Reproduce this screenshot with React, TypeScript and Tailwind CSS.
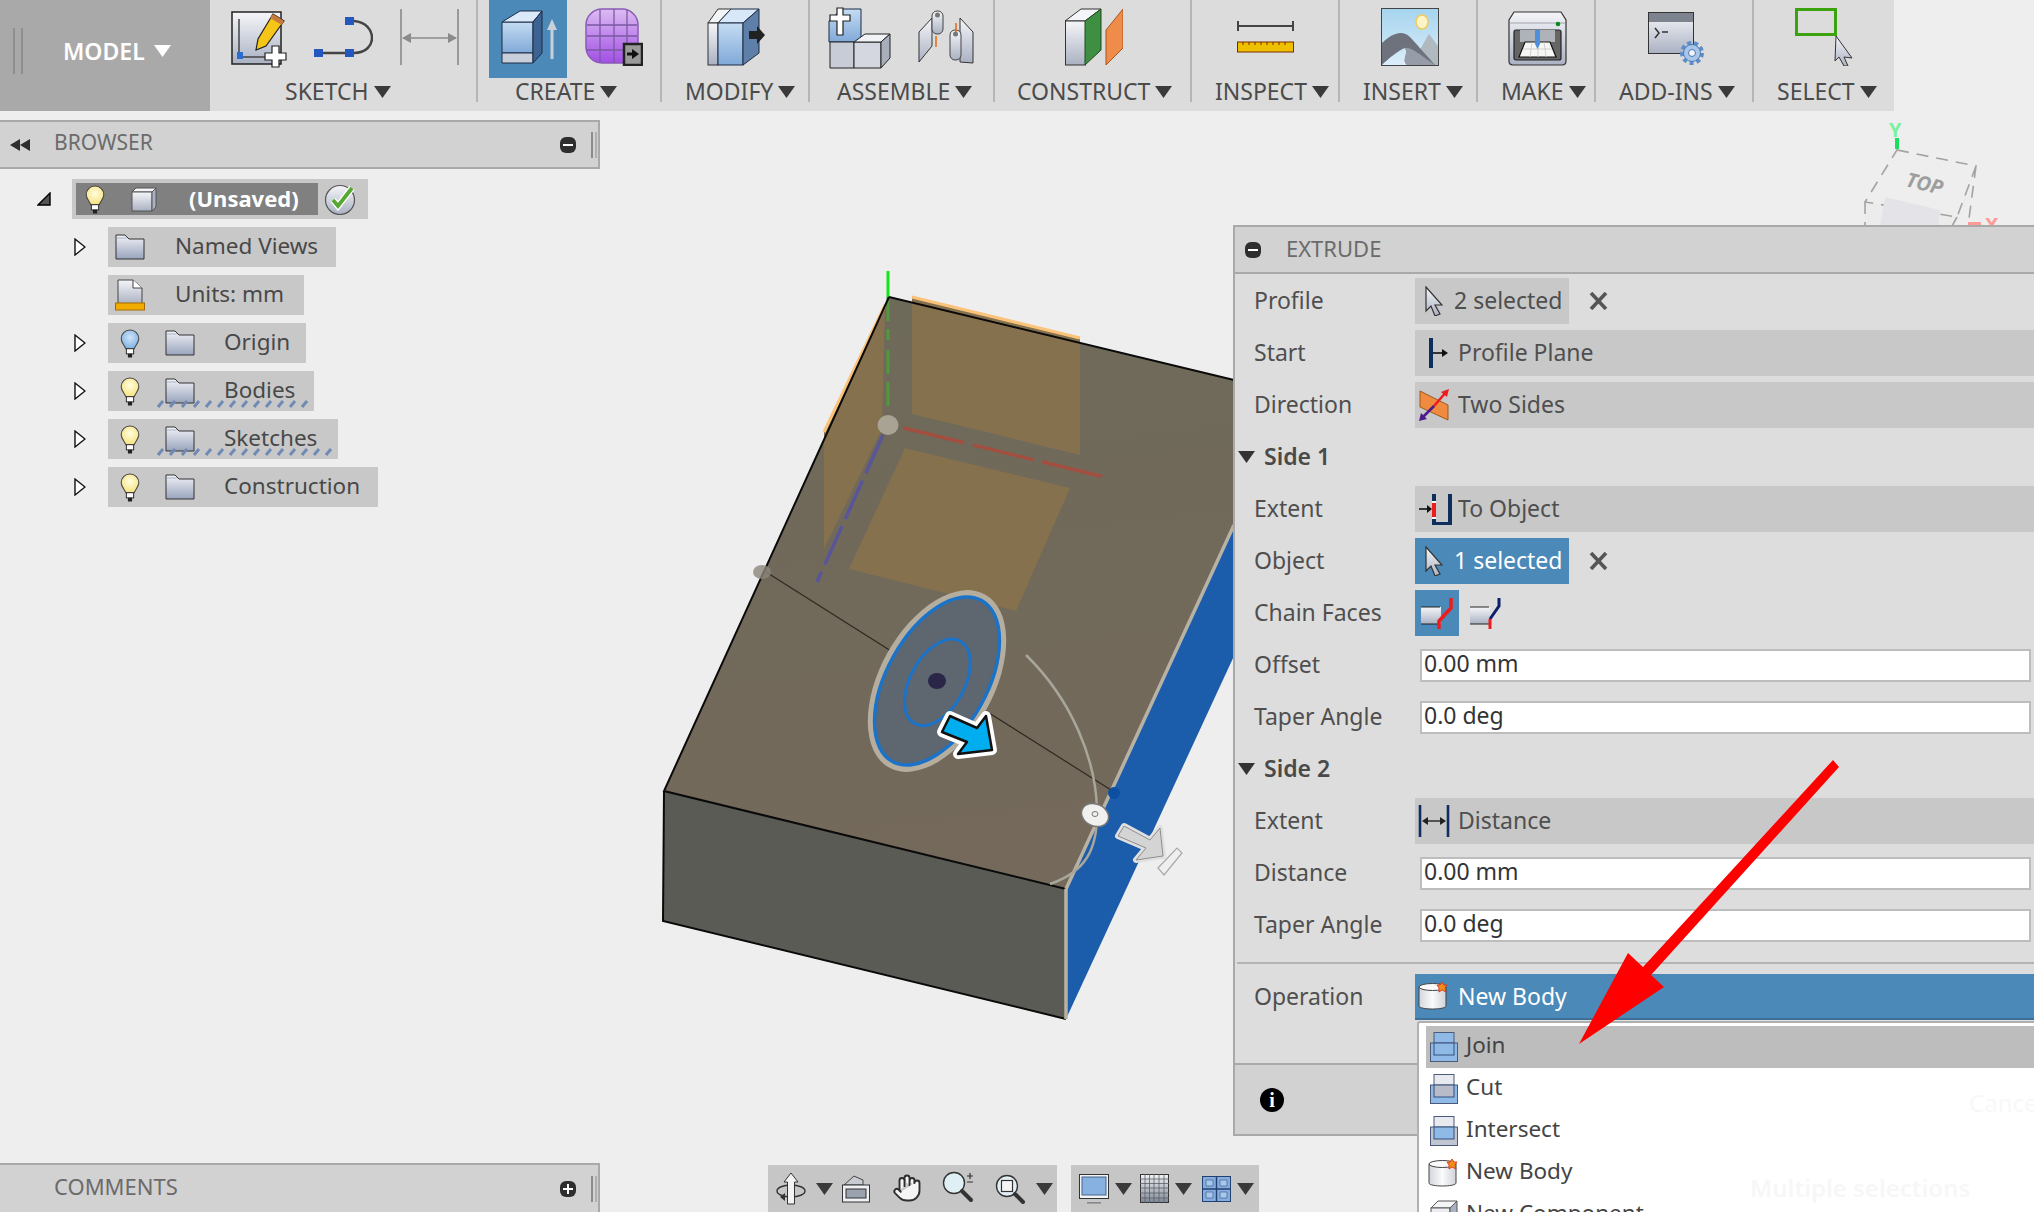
import React from "react";
import { Hand } from "lucide-react";

const Tri = ({ w = 17, h = 12, c = "#3a3a3a" }: { w?: number; h?: number; c?: string }) => (
  <svg width={w} height={h} viewBox="0 0 17 12" preserveAspectRatio="none" className="shrink-0">
    <polygon points="0,0 17,0 8.5,12" fill={c} />
  </svg>
);

const Defs = () => (
  <svg width="0" height="0" className="absolute">
    <defs>
      <linearGradient id="gBlue" x1="0" y1="0" x2="0" y2="1"><stop offset="0" stopColor="#c5dcf2" /><stop offset="1" stopColor="#7fa9d8" /></linearGradient>
      <linearGradient id="gGrey" x1="0" y1="0" x2="0" y2="1"><stop offset="0" stopColor="#f5f6f9" /><stop offset="1" stopColor="#aab1c2" /></linearGradient>
      <linearGradient id="gCyl" x1="0" y1="0" x2="1" y2="0"><stop offset="0" stopColor="#d4d6dc" /><stop offset="0.5" stopColor="#fbfbfc" /><stop offset="1" stopColor="#cfd2d8" /></linearGradient>
      <linearGradient id="gFolder" x1="0" y1="0" x2="0" y2="1"><stop offset="0" stopColor="#f2f3f7" /><stop offset="1" stopColor="#98a3bc" /></linearGradient>
      <linearGradient id="gPurple" x1="0" y1="0" x2="0" y2="1"><stop offset="0" stopColor="#dcbcf2" /><stop offset="1" stopColor="#a24fe6" /></linearGradient>
      <linearGradient id="gSky" x1="0" y1="0" x2="0" y2="1"><stop offset="0" stopColor="#a5d4ee" /><stop offset="1" stopColor="#dceefa" /></linearGradient>
      <radialGradient id="gBulbY" cx="0.5" cy="0.4" r="0.6"><stop offset="0" stopColor="#fffde0" /><stop offset="1" stopColor="#f8e27e" /></radialGradient>
      <radialGradient id="gBulbB" cx="0.5" cy="0.4" r="0.6"><stop offset="0" stopColor="#cfe4f8" /><stop offset="1" stopColor="#7fb2e4" /></radialGradient>
    </defs>
  </svg>
);

/* ---------- toolbar icons ---------- */
const SketchIcon = () => (
  <svg width="57" height="57" viewBox="0 0 57 57" className="overflow-visible">
    <rect x="1" y="1" width="49" height="52" fill="url(#gGrey)" stroke="#222" strokeWidth="1.5" />
    <path d="M8 8V46H36" fill="none" stroke="#444" strokeWidth="1.5" />
    <rect x="6" y="41" width="6" height="7" fill="#2a6cd0" />
    <polygon points="42,3 53,10 35,35 25,39 27,28" fill="#f5c518" stroke="#222" strokeWidth="1.2" />
    <polygon points="42,3 53,10 51,14 39,7" fill="#c67a3c" />
    <path d="M41 35h7v7h7v7h-7v7h-7v-7h-7v-7h7z" fill="#fff" stroke="#222" strokeWidth="1.2" />
  </svg>
);
const CurveIcon = () => (
  <svg width="59" height="40" viewBox="0 0 59 40">
    <path d="M9 36H31M40 4C64 6 64 36 40 36" fill="none" stroke="#444" strokeWidth="2.5" />
    <rect x="31" y="0" width="9" height="8" fill="#2458c0" />
    <rect x="31" y="32" width="9" height="8" fill="#2458c0" />
    <rect x="0" y="32" width="9" height="8" fill="#2458c0" />
  </svg>
);
const DimIcon = () => (
  <svg width="59" height="56" viewBox="0 0 59 56">
    <path d="M1 0V56M58 0V56M3 29H56" stroke="#8a8a8a" strokeWidth="1.6" fill="none" />
    <polygon points="2,29 11,24 11,34" fill="#8a8a8a" />
    <polygon points="57,29 48,24 48,34" fill="#8a8a8a" />
  </svg>
);
const ExtrudeIcon = () => (
  <svg width="58" height="54" viewBox="0 0 58 54">
    <polygon points="1,12 32,12 32,43 1,43" fill="url(#gBlue)" stroke="#1d2d44" strokeWidth="1" />
    <polygon points="1,43 32,43 32,53 1,53" fill="#c9cfda" stroke="#1d2d44" strokeWidth="1" />
    <polygon points="1,12 19,1 41,1 32,12" fill="#dbeafa" stroke="#1d2d44" strokeWidth="1" />
    <polygon points="32,12 41,1 41,43 32,53" fill="#3c6391" stroke="#1d2d44" strokeWidth="1" />
    <path d="M51 18V49" stroke="#c8d0d8" strokeWidth="3" />
    <polygon points="51,9 56,20 46,20" fill="#c8d0d8" />
  </svg>
);
const FormIcon = () => (
  <svg width="58" height="58" viewBox="0 0 58 58">
    <rect x="1" y="1" width="52" height="54" rx="16" fill="url(#gPurple)" stroke="#8a5ab8" strokeWidth="1.5" />
    <path d="M15 2V54M29 1V55M42 2V54M2 17H52M2 28H52M2 42H52" stroke="#7a5aa0" strokeWidth="1.3" fill="none" />
    <rect x="39" y="36" width="18" height="21" fill="#9a9a9a" stroke="#222" strokeWidth="2.5" />
    <path d="M42 46H48" stroke="#111" strokeWidth="3" />
    <polygon points="47,41 54,46 47,51" fill="#111" />
  </svg>
);
const ModifyIcon = () => (
  <svg width="58" height="58" viewBox="0 0 58 58">
    <polygon points="1,15 11,1 24,1 11,15" fill="#f3f4f7" stroke="#333" strokeWidth="1" />
    <rect x="1" y="15" width="10" height="42" fill="url(#gGrey)" stroke="#333" strokeWidth="1" />
    <polygon points="11,15 24,1 52,1 36,15" fill="#d8e8f8" stroke="#1d2d44" strokeWidth="1" />
    <rect x="11" y="15" width="25" height="42" fill="url(#gBlue)" stroke="#1d2d44" strokeWidth="1" />
    <polygon points="36,15 52,1 52,45 36,57" fill="#5d7fa8" stroke="#1d2d44" strokeWidth="1" />
    <polygon points="42,23 50,23 50,18 58,27 50,36 50,31 42,31" fill="#222" />
  </svg>
);
const AssembleIcon = () => (
  <svg width="61" height="60" viewBox="0 0 61 60" className="overflow-visible">
    <polygon points="0,34 0,13 13,1 32,1 32,34" fill="url(#gBlue)" stroke="#1d2d44" strokeWidth="1" />
    <polygon points="1,34 25,34 25,60 1,60" fill="#c8ccd6" stroke="#222" strokeWidth="1" />
    <polygon points="25,34 52,34 52,60 25,60" fill="#d4d7df" stroke="#222" strokeWidth="1" />
    <polygon points="25,34 36,26 61,26 52,34" fill="#f2f3f6" stroke="#222" strokeWidth="1" />
    <polygon points="52,34 61,26 61,50 52,60" fill="#a9aebb" stroke="#222" strokeWidth="1" />
    <path d="M8 0h6v7h7v6h-7v14H8V13H1V7h7z" fill="#fff" stroke="#222" strokeWidth="1.2" />
  </svg>
);
const JointIcon = () => (
  <svg width="56" height="54" viewBox="0 0 56 54">
    <polygon points="1,52 1,22 14,8 14,36" fill="url(#gGrey)" stroke="#333" strokeWidth="1" />
    <polygon points="42,52 55,53 55,22 42,8" fill="url(#gGrey)" stroke="#333" strokeWidth="1" />
    <rect x="14" y="1" width="11" height="23" rx="5" fill="url(#gGrey)" stroke="#444" strokeWidth="1" />
    <rect x="32" y="20" width="11" height="30" rx="5" fill="url(#gGrey)" stroke="#444" strokeWidth="1" />
    <path d="M38 13V24M18 26V37" stroke="#e86f1a" strokeWidth="1.6" />
    <circle cx="19.5" cy="5" r="2.5" fill="#777" />
    <circle cx="37.5" cy="24" r="2.5" fill="#777" />
  </svg>
);
const ConstructIcon = () => (
  <svg width="58" height="58" viewBox="0 0 58 58">
    <polygon points="0,13 16,1 36,1 20,13" fill="#f4f5f8" stroke="#333" strokeWidth="1" />
    <rect x="0.5" y="13" width="20" height="44" fill="url(#gGrey)" stroke="#333" strokeWidth="1" />
    <polygon points="20,13 36,1 36,42 20,57" fill="#3f8f43" stroke="#1f4a20" strokeWidth="1" />
    <polygon points="41,22 58,1 58,40 41,57" fill="#ef8c4a" stroke="#a8541c" strokeWidth="1" />
  </svg>
);
const InspectIcon = () => (
  <svg width="57" height="32" viewBox="0 0 57 32">
    <path d="M1 0V10M56 0V10M1 5H56" stroke="#444" strokeWidth="2" fill="none" />
    <rect x="0.5" y="21" width="56" height="10" fill="#efc000" stroke="#7a2c00" strokeWidth="1" />
    <path d="M6 21v3M12 21v3M18 21v3M24 21v3M30 21v3M36 21v3M42 21v3M48 21v3" stroke="#7a2c00" strokeWidth="1" />
  </svg>
);
const InsertIcon = () => (
  <svg width="58" height="58" viewBox="0 0 58 58">
    <rect x="0.5" y="0.5" width="57" height="57" fill="url(#gSky)" stroke="#444" strokeWidth="1" />
    <ellipse cx="41" cy="14" rx="6" ry="7" fill="#fdf5c8" stroke="#f4cb5a" strokeWidth="1.5" />
    <polygon points="30,57 48,26 57,38 57,57" fill="#b0b8c0" />
    <path d="M1 57V35C12 24 22 22 29 29C38 39 48 50 54 57H26C20 52 28 46 24 40C18 42 8 50 1 57Z" fill="#6e727c" />
    <path d="M26 57C20 52 28 46 24 40C30 38 46 52 54 57Z" fill="#979da8" />
  </svg>
);
const MakeIcon = () => (
  <svg width="59" height="55" viewBox="0 0 59 55">
    <path d="M6 1H53L58 9V50Q58 54 54 54H5Q1 54 1 50V9Z" fill="url(#gGrey)" stroke="#333" strokeWidth="1.2" />
    <path d="M2 12H57" stroke="#a0a4ac" strokeWidth="1" />
    <circle cx="50" cy="13" r="2.3" fill="#0a8a1e" />
    <rect x="6" y="19" width="47" height="30" rx="2" fill="#666666" stroke="#222" strokeWidth="1.2" />
    <rect x="12" y="19" width="35" height="12" fill="#aeb3ba" />
    <polygon points="11,46 17,31 42,31 48,46" fill="#f6f6f5" stroke="#111" strokeWidth="1.2" />
    <path d="M15 38H44M24 31L22 46M30 31V46M36 31L38 46" stroke="#c8c8c8" strokeWidth="0.8" />
    <polygon points="27,19 32,19 32,33 29.5,38 27,33" fill="#4d8fdb" />
  </svg>
);
const AddinsIcon = () => (
  <svg width="58" height="54" viewBox="0 0 58 54">
    <rect x="0.5" y="0.5" width="45" height="41" fill="url(#gGrey)" stroke="#333" strokeWidth="1" />
    <rect x="1" y="1" width="44" height="9" fill="#7e848f" />
    <path d="M7 16L11 21L7 26M14 20H20" stroke="#333" strokeWidth="1.5" fill="none" />
    <circle cx="44" cy="41" r="10" fill="none" stroke="#5e8dc8" strokeWidth="4" strokeDasharray="4 3" />
    <circle cx="44" cy="41" r="8.5" fill="#a8c6ea" stroke="#4a78b4" strokeWidth="1" />
    <circle cx="44" cy="41" r="3.5" fill="#f0f4fa" stroke="#4a78b4" strokeWidth="1" />
  </svg>
);
const SelectIcon = () => (
  <svg width="58" height="58" viewBox="0 0 58 58">
    <rect x="1.5" y="1.5" width="39" height="25" fill="none" stroke="#3ba30e" strokeWidth="3" />
    <polygon points="41,28 57,50 49,49 53,58 49,58 44,49 40,53" fill="url(#gGrey)" stroke="#333" strokeWidth="1" />
  </svg>
);

const ToolGroup = ({ w, lpad, label, children, last }: { w: string; lpad: string; label: string; children: React.ReactNode; last?: boolean }) => (
  <div className={`${w} h-[102px] flex flex-col shrink-0 ${last ? "" : "border-r-2 border-[#b6b6b6]"}`}>
    <div className="h-[79px] shrink-0 flex items-start">{children}</div>
    <div className={`h-[25px] shrink-0 flex items-center gap-[5px] text-[23px] leading-none text-[#4b4b4b] ${lpad}`}>
      <span>{label}</span>
      <Tri />
    </div>
  </div>
);

/* ---------- browser icons ---------- */
const Bulb = ({ blue }: { blue?: boolean }) => (
  <svg width="20" height="29" viewBox="0 0 19 28" className="shrink-0">
    <path d="M9.5 1C4.5 1 1 5 1 9.5C1 13 4 15.5 5.5 19H13.5C15 15.5 18 13 18 9.5C18 5 14.5 1 9.5 1Z" fill={blue ? "url(#gBulbB)" : "url(#gBulbY)"} stroke="#444" strokeWidth="1" />
    <rect x="6" y="19" width="7" height="5" fill="#fff" stroke="#333" strokeWidth="1" />
    <rect x="7.5" y="24" width="4" height="3.5" fill="#222" />
  </svg>
);
const Folder = () => (
  <svg width="30" height="26" viewBox="0 0 30 26" className="shrink-0">
    <path d="M1 1H10L14 5H29V25H1Z" fill="url(#gFolder)" stroke="#333" strokeWidth="1" />
    <path d="M2 4H12" stroke="#aab4c8" strokeWidth="1" />
  </svg>
);
const TreeTri = () => (
  <svg width="12" height="18" viewBox="0 0 12 18" className="shrink-0">
    <polygon points="1,1 11,9 1,17" fill="#fff" stroke="#111" strokeWidth="1.4" />
  </svg>
);
const Wavy = ({ w }: { w: number }) => (
  <svg width={w} height="8" viewBox={`0 0 ${w} 8`} className="absolute left-[49px] top-[29px]">
    {Array.from({ length: Math.floor(w / 12) + 1 }).map((_, i) => (
      <path key={i} d={`M${i * 12 + 1} 7L${i * 12 + 6} 1`} stroke="#6f8ab4" strokeWidth="3" />
    ))}
  </svg>
);

const TreeRow = ({ w, arrow = true, pad, text, children, extra }: { w: string; arrow?: boolean; pad: string; text: string; children?: React.ReactNode; extra?: React.ReactNode }) => (
  <div className="flex items-center h-[40px] pl-[74px]">
    <div className="w-[34px] shrink-0">{arrow && <TreeTri />}</div>
    <div className={`relative h-[40px] ${w} bg-[#c8c8c8] flex items-center`}>
      {children}
      <span className={`absolute top-0 h-[40px] flex items-center pb-[1px] ${pad} text-[22.5px] leading-none text-[#484848] whitespace-nowrap`}>{text}</span>
      {extra}
    </div>
  </div>
);

const Pill = ({ plus }: { plus?: boolean }) => (
  <div className="relative w-[16px] h-[16px] rounded-[6px] bg-[#2e2e2e] flex items-center justify-center">
    <div className="w-[10px] h-[2px] bg-white" />
    {plus && <div className="absolute w-[2px] h-[10px] bg-white" />}
  </div>
);
const Grip = () => (
  <div className="flex gap-[2px] h-[26px]">
    <div className="w-[2px] bg-[#8c8c8c]" />
    <div className="w-[2px] bg-[#b0b0b0]" />
  </div>
);

/* ---------- extrude icons ---------- */
const Cursor = () => (
  <svg width="18" height="30" viewBox="0 0 18 30" className="shrink-0">
    <polygon points="1,1 17,19 10,19 15,28 10,30 6,20 1,25" fill="url(#gGrey)" stroke="#333" strokeWidth="1.2" />
  </svg>
);
const StartIcon = () => (
  <svg width="32" height="32" viewBox="0 0 32 32">
    <path d="M13 1V31" stroke="#0f2e5e" strokeWidth="4" />
    <path d="M15 16H26" stroke="#111" strokeWidth="1.6" />
    <polygon points="30,16 24,12 24,20" fill="#111" />
  </svg>
);
const TwoSidesIcon = () => (
  <svg width="32" height="32" viewBox="0 0 32 32">
    <polygon points="2,2 30,16 30,31 2,18" fill="#ef8a3e" stroke="#9c5a20" strokeWidth="1" />
    <path d="M16 17L29 2" stroke="#ee1c1c" strokeWidth="2.6" />
    <polygon points="31,0 23,3 29,8" fill="#ee1c1c" />
    <path d="M16 17L3 30" stroke="#4b1a8c" strokeWidth="2.6" />
    <polygon points="1,32 3,24 9,30" fill="#4b1a8c" />
  </svg>
);
const ToObjectIcon = () => (
  <svg width="34" height="32" viewBox="0 0 34 32">
    <path d="M16 1V31H32V1" fill="none" stroke="#0f2e5e" strokeWidth="4" />
    <path d="M16 10V24" stroke="#ee1c1c" strokeWidth="4" />
    <path d="M16 8V10M16 24V26" stroke="#fff" strokeWidth="4" />
    <path d="M1 16H11" stroke="#111" strokeWidth="1.6" />
    <polygon points="14,16 9,12 9,20" fill="#111" />
  </svg>
);
const DistanceIcon = () => (
  <svg width="32" height="32" viewBox="0 0 32 32">
    <path d="M2 0V32M30 0V32" stroke="#0f2e5e" strokeWidth="2.6" />
    <path d="M6 16H26" stroke="#222" strokeWidth="1.4" />
    <polygon points="4,16 10,12 10,20" fill="#222" />
    <polygon points="28,16 22,12 22,20" fill="#222" />
  </svg>
);
const ChainIcon = ({ second }: { second?: boolean }) => (
  <svg width="34" height="32" viewBox="0 0 34 32">
    <rect x="1" y="10" width="20" height="17" fill="url(#gGrey)" />
    <path d="M1 10H20M1 27H20" stroke="#222" strokeWidth="1" />
    {second ? (
      <>
        <path d="M30 1V9L21 22" fill="none" stroke="#0b1f6b" strokeWidth="3" />
        <path d="M21 22V32" stroke="#ee1c1c" strokeWidth="3" />
      </>
    ) : (
      <path d="M31 1V11L19 24V32" fill="none" stroke="#ee1c1c" strokeWidth="3.5" />
    )}
  </svg>
);
const CylNew = () => (
  <svg width="30" height="28" viewBox="0 0 30 28" className="shrink-0">
    <path d="M1 5V24C1 28 28 28 28 24V5Z" fill="url(#gCyl)" stroke="#444" strokeWidth="1" />
    <ellipse cx="14.5" cy="5" rx="13.5" ry="3.5" fill="#fafafb" stroke="#444" strokeWidth="1" />
    <polygon points="24,0 26,3 29,3 27,6 28,10 24,8 21,10 21,6 19,3 22,3" fill="#f28c18" stroke="#d8261c" strokeWidth="0.8" />
  </svg>
);
const OpIcon = ({ kind }: { kind: "join" | "cut" | "intersect" }) => (
  <svg width="28" height="30" viewBox="0 0 28 30" className="shrink-0">
    <rect x="4" y="0.5" width="20" height="22" fill={kind === "join" ? "#8fb9e6" : "#e8eaf0"} stroke="#4a5a78" strokeWidth="1" />
    <rect x="0.5" y="11" width="27" height="18.5" fill={kind === "intersect" ? "#c2c6d2" : "#8fb9e6"} stroke="#4a5a78" strokeWidth="1" />
    <rect x="4" y="11" width="20" height="12" fill={kind === "join" ? "#8fb9e6" : kind === "cut" ? "#b8bcc8" : "#8fb9e6"} stroke="#34507a" strokeWidth="1" />
  </svg>
);
const XMark = () => (
  <svg width="19" height="18" viewBox="0 0 19 18">
    <path d="M2 1L17 17M17 1L2 17" stroke="#555" strokeWidth="3.6" />
  </svg>
);

const Label = ({ children }: { children: React.ReactNode }) => (
  <div className="w-[180px] pl-[19px] pb-[1px] shrink-0 text-[23px] leading-none text-[#4f4f4f]">{children}</div>
);
const Row = ({ label, children }: { label: string; children?: React.ReactNode }) => (
  <div className="flex items-center h-[46px]">
    <Label>{label}</Label>
    {children}
  </div>
);
const Field = ({ value }: { value: string }) => (
  <div className="ml-[5px] mr-[3px] flex-1 h-[33px] bg-white border-2 border-[#bdbdbd] flex items-center pl-[2px] pb-[3px] text-[23px] leading-none text-[#333]">{value}</div>
);
const Select = ({ icon, text, blue }: { icon: React.ReactNode; text: string; blue?: boolean }) => (
  <div className={`flex-1 h-[46px] flex items-center pl-[3px] text-[23px] leading-none ${blue ? "bg-[#4a89b8] text-white border-b-2 border-[#3d7099]" : "bg-[#c8c8c8] text-[#4f4f4f]"}`}>
    <div className="w-[40px] flex items-center">{icon}</div>
    <span className={blue ? "" : "pb-[1px]"}>{text}</span>
  </div>
);
const Picker = ({ text, blue }: { text: string; blue?: boolean }) => (
  <>
    <div className={`w-[154px] h-[46px] flex items-center pl-[10px] text-[23px] leading-none ${blue ? "bg-[#4a89b8] text-white" : "bg-[#c8c8c8] text-[#4f4f4f]"}`}>
      <Cursor />
      <span className="ml-[11px] pb-[1px] whitespace-nowrap">{text}</span>
    </div>
    <div className="ml-[20px] flex items-center"><XMark /></div>
  </>
);
const SideHead = ({ text }: { text: string }) => (
  <div className="flex items-center h-[46px] pl-[3px] gap-[9px] text-[23px] leading-none font-semibold text-[#4a4a4a]">
    <Tri w={17} h={12} c="#333" />
    <span className="pb-[1px]">{text}</span>
  </div>
);

/* ---------- nav bar icons ---------- */
const OrbitIcon = () => (
  <svg width="30" height="32" viewBox="0 0 30 32">
    <ellipse cx="15" cy="18" rx="14" ry="6" fill="none" stroke="#333" strokeWidth="1.4" />
    <polygon points="15,0 22,9 18.5,9 18.5,31 11.5,31 11.5,9 8,9" fill="#f2f3f5" stroke="#333" strokeWidth="1" />
    <polygon points="4,24 9,20 9,28" fill="#333" />
  </svg>
);
const ClapIcon = () => (
  <svg width="28" height="28" viewBox="0 0 28 28">
    <polygon points="2,10 12,1 21,5 21,10" fill="#c8cbd2" stroke="#444" strokeWidth="1" />
    <rect x="0.5" y="10" width="27" height="17" fill="#eef0f3" stroke="#333" strokeWidth="1" />
    <rect x="4" y="14" width="20" height="9" fill="#9aa1af" stroke="#333" strokeWidth="1" />
  </svg>
);
const ZoomIcon = () => (
  <svg width="32" height="32" viewBox="0 0 32 32">
    <circle cx="12" cy="12" r="10.5" fill="#dff0f4" stroke="#333" strokeWidth="1.4" />
    <path d="M20 20L29 29" stroke="#333" strokeWidth="4" strokeLinecap="round" />
    <path d="M25 5H31M28 2V8M25 11H31" stroke="#333" strokeWidth="1.2" />
  </svg>
);
const ZoomWinIcon = () => (
  <svg width="30" height="30" viewBox="0 0 30 30">
    <circle cx="12" cy="12" r="10.5" fill="#e2eff2" stroke="#333" strokeWidth="1.4" />
    <rect x="6.5" y="6.5" width="11" height="11" fill="#f4f5f6" stroke="#333" strokeWidth="1.2" />
    <path d="M20 20L28 28" stroke="#333" strokeWidth="4" strokeLinecap="round" />
  </svg>
);
const MonitorIcon = () => (
  <svg width="30" height="30" viewBox="0 0 30 30">
    <rect x="0.5" y="0.5" width="29" height="24" fill="#f2f3f5" stroke="#333" strokeWidth="1" />
    <rect x="3" y="3" width="24" height="18" fill="#86b1e0" stroke="#44648c" strokeWidth="1" />
    <polygon points="12,25 18,25 19,28 11,28" fill="#c4c7ce" />
    <rect x="8" y="28" width="14" height="1.6" fill="#888" />
  </svg>
);
const GridIcon = () => (
  <svg width="29" height="29" viewBox="0 0 29 29">
    <defs>
      <linearGradient id="gGrid" x1="0" y1="0" x2="0" y2="1"><stop offset="0" stopColor="#f3f3f5" /><stop offset="1" stopColor="#7f8796" /></linearGradient>
    </defs>
    <rect x="0.5" y="0.5" width="28" height="28" fill="url(#gGrid)" stroke="#333" strokeWidth="1" />
    <path d="M5 0V29M9.5 0V29M14 0V29M19 0V29M24 0V29M0 5H29M0 9.5H29M0 14H29M0 19H29M0 24H29" stroke="#5c5f68" strokeWidth="0.8" />
  </svg>
);
const ViewsIcon = () => (
  <svg width="29" height="26" viewBox="0 0 29 26">
    <rect x="0.5" y="0.5" width="28" height="25" fill="#84ace0" stroke="#23416e" strokeWidth="1" />
    <path d="M14.5 0V26M0 13H29" stroke="#23416e" strokeWidth="1.4" />
    <path d="M4 4h7v6h-7zM18 4h7v6h-7zM4 16h7v6h-7zM18 16h7v6h-7z" fill="#a8c7ec" stroke="#44648c" strokeWidth="0.7" />
  </svg>
);

/* ---------- 3D canvas ---------- */
const Canvas = () => (
  <svg className="absolute left-0 top-0 pointer-events-none" width="2034" height="1212" viewBox="0 0 2034 1212">
    <defs>
      <linearGradient id="gTop" gradientUnits="userSpaceOnUse" x1="889" y1="297" x2="960" y2="860">
        <stop offset="0" stopColor="#6e6a5a" />
        <stop offset="1" stopColor="#74695a" />
      </linearGradient>
    </defs>
    {/* solid */}
    <polygon points="889,297 1234,380 1234,525 1066,889 664,791" fill="url(#gTop)" />
    <polygon points="664,791 1066,889 1066,1019 663,921" fill="#5b5b55" />
    <polygon points="1066,889 1234,525 1234,656 1066,1019" fill="#1b5cab" />
    {/* origin planes */}
    <polygon points="912,296 1080,337 1080,455 912,414" fill="#85714e" />
    <polygon points="885,305 824,432 824,549 882,429" fill="#85714e" />
    <polygon points="905,448 1070,488 1016,611 849,569" fill="#85714e" />
    <path d="M912,297L1080,338M885,305L824,432" stroke="#fbc37a" strokeWidth="3" fill="none" />
    {/* axes */}
    <path d="M888,271V297" stroke="#14e414" strokeWidth="3" />
    <path d="M888,297V340M888,350V414" stroke="#4f9a3a" strokeWidth="3" strokeDasharray="24 8" />
    <path d="M904,428L1104,477" stroke="#a34f40" strokeWidth="3.5" strokeDasharray="62 9" />
    <path d="M883,435L817,582" stroke="#5a5598" strokeWidth="3.5" strokeDasharray="42 8" />
    <ellipse cx="888" cy="425" rx="10.5" ry="10" fill="#a8a393" />
    {/* edges */}
    <path d="M889,297L1234,380M889,297L664,791L1066,889M664,791L663,921L1066,1019" stroke="#0a0a0a" strokeWidth="2" fill="none" />
    <path d="M1066,889L1234,525M1066,889V1019" stroke="#b7b2a4" strokeWidth="3.5" fill="none" />
    <path d="M766,572L1111,790" stroke="#2e2a22" strokeWidth="1.2" />
    <ellipse cx="762" cy="572" rx="9" ry="7" fill="#8b867a" opacity="0.8" />
    <circle cx="1114" cy="793" r="6" fill="#0d4fa0" />
    {/* arc */}
    <path d="M1026,655C1072,700 1096,760 1097,810C1098,850 1085,872 1050,884" fill="none" stroke="#a8a59a" strokeWidth="2.5" />
    {/* disc */}
    <g transform="rotate(-61 937 681)">
      <ellipse cx="937" cy="681" rx="99" ry="57" fill="#b5ae9f" />
      <ellipse cx="937" cy="681" rx="92" ry="50" fill="#5e6670" stroke="#1a73c8" strokeWidth="3.5" />
      <ellipse cx="936" cy="682" rx="47" ry="27" fill="none" stroke="#1a73c8" strokeWidth="3" />
    </g>
    <ellipse cx="937" cy="681" rx="9" ry="8" fill="#2b2547" />
    {/* blue arrow */}
    <polygon points="950,716 942,732 967,742 958,754 992,750 986,716 977,728" fill="#00aeef" stroke="#fff" strokeWidth="10" strokeLinejoin="round" />
    <polygon points="950,716 942,732 967,742 958,754 992,750 986,716 977,728" fill="#00aeef" stroke="#111" strokeWidth="2.5" strokeLinejoin="round" />
    {/* side handle + grey arrow */}
    <ellipse cx="1095" cy="815" rx="14" ry="11" transform="rotate(25 1095 815)" fill="#f0f0ee" stroke="#777" strokeWidth="1.5" />
    <ellipse cx="1095" cy="814" rx="3" ry="2.5" fill="none" stroke="#777" strokeWidth="1" />
    <polygon points="1124,826 1118,836 1146,848 1136,860 1163,856 1160,828 1150,840" fill="#e6e6e6" stroke="#e0e0e0" strokeWidth="6" strokeLinejoin="round" />
    <polygon points="1124,826 1118,836 1146,848 1136,860 1163,856 1160,828 1150,840" fill="#d4d4d4" stroke="#8d8d8d" strokeWidth="1" strokeLinejoin="round" />
    <polygon points="1158,868 1177,848 1182,853 1164,875" fill="#efefef" stroke="#a8a8a8" strokeWidth="1.2" />
    {/* view cube */}
    <polygon points="1897,150 1976,166 1957,217 1865,202 1865,232 1955,232 1976,166" fill="#ececed" />
    <path d="M1897,150L1976,166L1957,217L1865,202ZM1865,202V226M1957,217L1952,226M1976,166L1968,226" fill="none" stroke="#a3a3a3" strokeWidth="1.6" strokeDasharray="12 8" />
    <polygon points="1885,197 1940,210 1938,226 1880,226" fill="#e4e4e8" />
    <path d="M1897,138V149" stroke="#18e05a" strokeWidth="4" />
    <text x="1889" y="137" fontSize="20" fontWeight="700" fill="#7cf0a0" fontFamily="'Noto Sans',sans-serif">Y</text>
    <text x="1905" y="186" fontSize="20" fontWeight="700" fontStyle="italic" fill="#9d9d9d" fontFamily="'Noto Sans',sans-serif" transform="rotate(14 1905 186)">TOP</text>
    <text x="1985" y="232" fontSize="20" fontWeight="700" fill="#ff9a9a" fontFamily="'Noto Sans',sans-serif">X</text>
    <path d="M1968,224H1981" stroke="#ff9a9a" strokeWidth="4" />
  </svg>
);

export default function App() {
  return (
    <div className="relative w-[2034px] h-[1212px] overflow-hidden flex flex-col bg-[#eeeeee] font-['Noto_Sans',sans-serif]">
      <Defs />
      <Canvas />

      {/* top toolbar */}
      <div className="relative flex h-[111px] w-[1894px] shrink-0 bg-[#dcdcdc]">
        <div className="w-[210px] h-[111px] shrink-0 bg-[#a9a9a9] flex items-center pl-[13px] pb-[9px]">
          <div className="flex gap-[6px] h-[46px]">
            <div className="w-[2px] bg-[#8f8f8f]" />
            <div className="w-[2px] bg-[#8f8f8f]" />
          </div>
          <span className="ml-[40px] text-[23px] leading-none font-semibold text-white">MODEL</span>
          <div className="ml-[9px]"><Tri c="#ffffff" /></div>
        </div>
        <ToolGroup w="w-[268px]" lpad="pl-[75px]" label="SKETCH">
          <div className="ml-[21px] mt-[11px]"><SketchIcon /></div>
          <div className="ml-[26px] mt-[17px]"><CurveIcon /></div>
          <div className="ml-[27px] mt-[9px]"><DimIcon /></div>
        </ToolGroup>
        <ToolGroup w="w-[184px]" lpad="pl-[37px]" label="CREATE">
          <div className="ml-[11px] w-[78px] h-[78px] bg-[#4a89b8] pl-[12px] pt-[10px]"><ExtrudeIcon /></div>
          <div className="ml-[18px] mt-[8px]"><FormIcon /></div>
        </ToolGroup>
        <ToolGroup w="w-[148px]" lpad="pl-[23px]" label="MODIFY">
          <div className="ml-[45px] mt-[8px]"><ModifyIcon /></div>
        </ToolGroup>
        <ToolGroup w="w-[185px]" lpad="pl-[27px]" label="ASSEMBLE">
          <div className="ml-[19px] mt-[8px]"><AssembleIcon /></div>
          <div className="ml-[28px] mt-[10px]"><JointIcon /></div>
        </ToolGroup>
        <ToolGroup w="w-[197px]" lpad="pl-[22px]" label="CONSTRUCT">
          <div className="ml-[70px] mt-[8px]"><ConstructIcon /></div>
        </ToolGroup>
        <ToolGroup w="w-[148px]" lpad="pl-[23px]" label="INSPECT">
          <div className="ml-[45px] mt-[21px]"><InspectIcon /></div>
        </ToolGroup>
        <ToolGroup w="w-[138px]" lpad="pl-[23px]" label="INSERT">
          <div className="ml-[41px] mt-[8px]"><InsertIcon /></div>
        </ToolGroup>
        <ToolGroup w="w-[118px]" lpad="pl-[23px]" label="MAKE">
          <div className="ml-[30px] mt-[11px]"><MakeIcon /></div>
        </ToolGroup>
        <ToolGroup w="w-[158px]" lpad="pl-[23px]" label="ADD-INS">
          <div className="ml-[52px] mt-[12px]"><AddinsIcon /></div>
        </ToolGroup>
        <ToolGroup w="w-[140px]" lpad="pl-[23px]" label="SELECT" last>
          <div className="ml-[41px] mt-[8px]"><SelectIcon /></div>
        </ToolGroup>
      </div>

      {/* body */}
      <div className="relative flex-1 flex flex-col justify-between">
        <div className="w-[600px]">
          <div className="mt-[9px] h-[49px] bg-[#d2d2d2] border-y-2 border-r-2 border-[#a9a9a9] flex items-center text-[21px] leading-none text-[#6b6b6b]">
            <svg width="20" height="12" viewBox="0 0 20 12" className="ml-[10px]">
              <polygon points="0,6 10,0 10,12" fill="#2e2e2e" />
              <polygon points="10,6 20,0 20,12" fill="#2e2e2e" />
            </svg>
            <span className="ml-[24px] pb-[4px]">BROWSER</span>
            <div className="ml-auto"><Pill /></div>
            <div className="ml-[15px] mr-[1px]"><Grip /></div>
          </div>

          <div className="mt-[10px] flex flex-col gap-[8px]">
            <div className="flex items-center h-[40px] pl-[37px]">
              <svg width="14" height="14" viewBox="0 0 14 14" className="shrink-0">
                <polygon points="1,13 13,1 13,13" fill="#555" stroke="#000" strokeWidth="1.4" />
              </svg>
              <div className="ml-[21px] w-[296px] h-[40px] bg-[#c8c8c8] flex items-center pl-[4px]">
                <div className="w-[242px] h-[32px] bg-[#808080] flex items-center pl-[9px] relative">
                  <Bulb />
                  <svg width="26" height="25" viewBox="0 0 26 25" className="ml-[26px] shrink-0">
                    <polygon points="1,5 5,1 25,1 21,5" fill="#f4f5f8" stroke="#555" strokeWidth="1" />
                    <rect x="1" y="5" width="20" height="19" fill="url(#gGrey)" stroke="#555" strokeWidth="1" />
                    <polygon points="21,5 25,1 25,20 21,24" fill="#aab1c2" stroke="#555" strokeWidth="1" />
                  </svg>
                  <span className="ml-[32px] pb-[3px] text-[22px] leading-none font-bold text-white whitespace-nowrap">(Unsaved)</span>
                </div>
                <svg width="32" height="32" viewBox="0 0 32 32" className="ml-[6px]">
                  <circle cx="16" cy="17" r="14.5" fill="url(#gGrey)" stroke="#555" strokeWidth="1.2" />
                  <path d="M9 17L14 23L28 5" fill="none" stroke="#fff" strokeWidth="6.5" />
                  <path d="M9 17L14 23L28 5" fill="none" stroke="#57a832" strokeWidth="3.8" />
                </svg>
              </div>
            </div>
            <TreeRow w="w-[228px]" pad="left-[67px]" text="Named Views"><div className="ml-[7px]"><Folder /></div></TreeRow>
            <TreeRow w="w-[196px]" arrow={false} pad="left-[67px]" text="Units: mm">
              <svg width="30" height="32" viewBox="0 0 30 32" className="ml-[7px] shrink-0">
                <path d="M3 1H18L27 9V25H3Z" fill="url(#gGrey)" stroke="#444" strokeWidth="1" />
                <path d="M18 1V9H27" fill="#fff" stroke="#444" strokeWidth="1" />
                <rect x="0.5" y="24" width="29" height="7" fill="#f0ac00" stroke="#a86a00" strokeWidth="1" />
              </svg>
            </TreeRow>
            <TreeRow w="w-[198px]" pad="left-[116px]" text="Origin">
              <div className="ml-[12px]"><Bulb blue /></div><div className="ml-[25px]"><Folder /></div>
            </TreeRow>
            <TreeRow w="w-[206px]" pad="left-[116px]" text="Bodies" extra={<Wavy w={151} />}>
              <div className="ml-[12px]"><Bulb /></div><div className="ml-[25px]"><Folder /></div>
            </TreeRow>
            <TreeRow w="w-[230px]" pad="left-[116px]" text="Sketches" extra={<Wavy w={176} />}>
              <div className="ml-[12px]"><Bulb /></div><div className="ml-[25px]"><Folder /></div>
            </TreeRow>
            <TreeRow w="w-[270px]" pad="left-[116px]" text="Construction">
              <div className="ml-[12px]"><Bulb /></div><div className="ml-[25px]"><Folder /></div>
            </TreeRow>
          </div>
        </div>

        {/* bottom row */}
        <div className="flex items-end">
          <div className="w-[600px] h-[49px] bg-[#d2d2d2] border-t-2 border-r-2 border-[#a9a9a9] flex items-center text-[22px] leading-none text-[#6b6b6b]">
            <span className="ml-[54px] pb-[6px]">COMMENTS</span>
            <div className="ml-auto"><Pill plus /></div>
            <div className="ml-[15px] mr-[1px]"><Grip /></div>
          </div>
          <div className="ml-[168px] w-[289px] h-[47px] bg-[#c6c6c6] flex items-center">
            <div className="ml-[8px]"><OrbitIcon /></div>
            <div className="ml-[10px]"><Tri /></div>
            <div className="ml-[9px]"><ClapIcon /></div>
            <div className="ml-[22px] -translate-y-[1px] text-[#2e2e2e]"><Hand size={30} fill="#f4f4f4" strokeWidth={1.5} /></div>
            <div className="ml-[20px] -translate-y-[2px]"><ZoomIcon /></div>
            <div className="ml-[21px]"><ZoomWinIcon /></div>
            <div className="ml-[11px]"><Tri /></div>
          </div>
          <div className="ml-[14px] w-[188px] h-[47px] bg-[#c6c6c6] flex items-center">
            <div className="ml-[8px]"><MonitorIcon /></div>
            <div className="ml-[6px]"><Tri /></div>
            <div className="ml-[8px]"><GridIcon /></div>
            <div className="ml-[6px]"><Tri /></div>
            <div className="ml-[10px]"><ViewsIcon /></div>
            <div className="ml-[6px]"><Tri /></div>
          </div>
        </div>
      </div>

      {/* extrude dialog */}
      <div className="absolute left-[1233px] top-[225px] w-[801px] bg-[#dddddd] border-l-2 border-y-2 border-[#a9a9a9]">
        <div className="h-[47px] bg-[#d2d2d2] border-b-2 border-[#a9a9a9] flex items-center text-[22px] leading-none text-[#6b6b6b]">
          <div className="ml-[10px]"><Pill /></div>
          <span className="ml-[25px] pb-[3px]">EXTRUDE</span>
        </div>
        <div className="pt-[4px] flex flex-col gap-[6px]">
          <Row label="Profile"><Picker text="2 selected" /></Row>
          <Row label="Start"><Select icon={<StartIcon />} text="Profile Plane" /></Row>
          <Row label="Direction"><Select icon={<TwoSidesIcon />} text="Two Sides" /></Row>
          <SideHead text="Side 1" />
          <Row label="Extent"><Select icon={<ToObjectIcon />} text="To Object" /></Row>
          <Row label="Object"><Picker text="1 selected" blue /></Row>
          <Row label="Chain Faces">
            <div className="w-[44px] h-[46px] bg-[#4a89b8] flex items-center justify-center"><ChainIcon /></div>
            <div className="ml-[10px]"><ChainIcon second /></div>
          </Row>
          <Row label="Offset"><Field value="0.00 mm" /></Row>
          <Row label="Taper Angle"><Field value="0.0 deg" /></Row>
          <SideHead text="Side 2" />
          <Row label="Extent"><Select icon={<DistanceIcon />} text="Distance" /></Row>
          <Row label="Distance"><Field value="0.00 mm" /></Row>
          <Row label="Taper Angle"><Field value="0.0 deg" /></Row>
        </div>
        <div className="mt-[14px] ml-[2px] h-[2px] bg-[#b4b4b4]" />
        <div className="mt-[10px]">
          <Row label="Operation"><Select icon={<CylNew />} text="New Body" blue /></Row>
        </div>
        <div className="mt-[43px] h-[71px] bg-[#d2d2d2] border-t-2 border-[#a9a9a9] flex items-center">
          <div className="ml-[25px] w-[24px] h-[24px] rounded-full bg-black flex items-center justify-center text-white font-['Liberation_Serif',serif] font-bold text-[20px] leading-none">i</div>
        </div>

        {/* dropdown */}
        <div className="absolute left-[182px] top-[794px] w-[640px] h-[400px] bg-white border-l-2 border-t-2 border-[#b0b0b0] rounded-tl-[3px] pt-[3px] pl-[7px]">
          {[
            { k: "join", t: "Join", on: true },
            { k: "cut", t: "Cut" },
            { k: "intersect", t: "Intersect" },
            { k: "new", t: "New Body" },
            { k: "comp", t: "New Component" },
          ].map((it) => (
            <div key={it.t} className={`h-[42px] flex items-center text-[22.5px] leading-none text-[#444] ${it.on ? "bg-[#bdbdbd]" : ""}`}>
              <div className="ml-[4px] w-[36px] flex items-center">
                {it.k === "join" && <OpIcon kind="join" />}
                {it.k === "cut" && <OpIcon kind="cut" />}
                {it.k === "intersect" && <OpIcon kind="intersect" />}
                {it.k === "new" && <div className="-ml-[2px]"><CylNew /></div>}
                {it.k === "comp" && (
                  <svg width="28" height="30" viewBox="0 0 28 30" className="shrink-0">
                    <polygon points="1,8 8,1 27,1 20,8" fill="#f4f5f8" stroke="#555" strokeWidth="1" />
                    <rect x="1" y="8" width="19" height="20" fill="url(#gGrey)" stroke="#555" strokeWidth="1" />
                    <polygon points="20,8 27,1 27,20 20,28" fill="#aab1c2" stroke="#555" strokeWidth="1" />
                  </svg>
                )}
              </div>
              <span className="pb-[3px]">{it.t}</span>
            </div>
          ))}
          <span className="absolute left-[331px] top-[153px] text-[24px] leading-none text-[#f7f7f7] font-semibold whitespace-nowrap">Multiple selections</span>
          <span className="absolute left-[550px] top-[68px] text-[24px] leading-none text-[#f8f8f8] whitespace-nowrap">Cancel</span>
        </div>
      </div>

      {/* annotation arrow */}
      <svg className="absolute left-0 top-0 pointer-events-none" width="2034" height="1212" viewBox="0 0 2034 1212">
        <polygon points="1833,760 1839,767 1651,975 1664,987 1579,1044 1628,953 1643,967" fill="#ff0000" />
      </svg>
    </div>
  );
}
